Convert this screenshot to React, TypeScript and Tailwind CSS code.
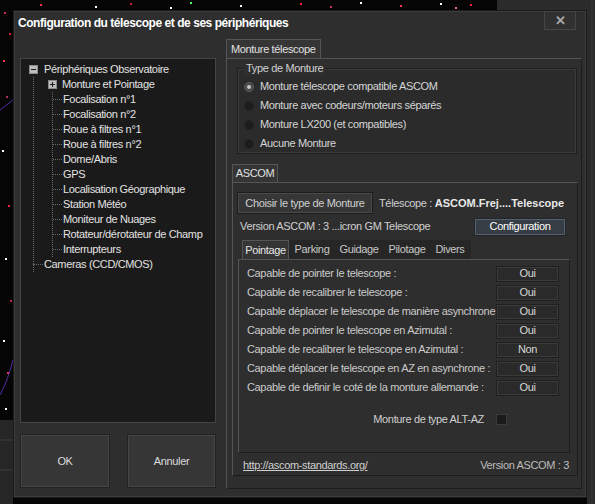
import React from 'react';

const font = { fontFamily: '"Liberation Sans", Arial, sans-serif' };

const treeChildren = [
  'Focalisation n°1',
  'Focalisation n°2',
  'Roue à filtres n°1',
  'Roue à filtres n°2',
  'Dome/Abris',
  'GPS',
  'Localisation Géographique',
  'Station Météo',
  'Moniteur de Nuages',
  'Rotateur/dérotateur de Champ',
  'Interrupteurs',
];

const capabilities: [string, string][] = [
  ['Capable de pointer le telescope :', 'Oui'],
  ['Capable de recalibrer le telescope :', 'Oui'],
  ['Capable déplacer le telescope de manière asynchrone :', 'Oui'],
  ['Capable de pointer le telescope en Azimutal :', 'Oui'],
  ['Capable de recalibrer le telescope en Azimutal :', 'Non'],
  ['Capable déplacer le telescope en AZ en asynchrone :', 'Oui'],
  ['Capable de definir le coté de la monture allemande :', 'Oui'],
];

const mountTypes = [
  'Monture télescope compatible ASCOM',
  'Monture avec codeurs/moteurs séparés',
  'Monture LX200 (et compatibles)',
  'Aucune Monture',
];

const Stars: React.FC = () => {
  const dots = [
    [4, 12, '#c0304a'], [9, 33, '#d02040'], [3, 60, '#ff3050'], [6, 96, '#b03060'],
    [2, 150, '#ffffff'], [8, 205, '#ff2040'], [5, 258, '#ffffff'], [10, 300, '#c02050'],
    [3, 340, '#ffffff'], [7, 372, '#e03050'], [5, 408, '#ffffff'], [40, 4, '#ff3050'],
    [95, 6, '#ffffff'], [130, 3, '#d02040'], [170, 7, '#ffffff'], [190, 2, '#40ff60'],
    [240, 5, '#ffffff'], [300, 3, '#ff2040'], [330, 6, '#c03070'], [360, 2, '#ffffff'],
    [400, 5, '#ff3050'], [440, 3, '#ffffff'], [455, 7, '#ff60a0'], [470, 4, '#ff2040'],
  ] as const;
  return (
    <svg className="absolute inset-0" width="595" height="504">
      <rect x="0" y="0" width="595" height="504" fill="#050505" />
      <rect x="497" y="0" width="98" height="10" fill="#2b2b2b" />
      <rect x="587" y="0" width="8" height="504" fill="#2b2b2b" />
      <line x1="592" y1="0" x2="592" y2="504" stroke="#3a3a3a" />
      <rect x="0" y="420" width="13" height="84" fill="#262626" />
      <line x1="0" y1="440" x2="13" y2="440" stroke="#3c3c3c" />
      <line x1="0" y1="470" x2="13" y2="470" stroke="#3c3c3c" />
      <path d="M0 110 L13 100 M0 395 Q8 380 13 360" stroke="#5030a0" strokeWidth="1" fill="none" />
      {dots.map(([x, y, c], i) => (
        <rect key={i} x={x} y={y} width="2" height="2" fill={c} />
      ))}
    </svg>
  );
};

const TreeBox: React.FC<{ plus?: boolean }> = ({ plus }) => (
  <span className="w-[9px] h-[9px] bg-[#bdbdbd] border border-[#8a8a8a] flex items-center justify-center relative">
    <span className="absolute w-[5px] h-px bg-[#1a1a1a]" />
    {plus && <span className="absolute h-[5px] w-px bg-[#1a1a1a]" />}
  </span>
);

const Tree: React.FC = () => (
  <div className="h-[365px] bg-[#1a1a1a] border border-[#444] pt-[3px] text-[11px] text-[#e2e2e2] leading-[15px]">
    <div className="flex items-center h-[15px] pl-[8px]">
      <TreeBox />
      <span className="ml-[6px]">Périphériques Observatoire</span>
    </div>
    <div className="ml-[12px] border-l border-dotted border-[#6a6a6a]">
      <div className="flex items-center h-[15px] pl-[14px]">
        <TreeBox plus />
        <span className="ml-[5px]">Monture et Pointage</span>
      </div>
      <div className="ml-[18px] border-l border-dotted border-[#6a6a6a] h-[165px]">
        {treeChildren.map((t) => (
          <div key={t} className="flex items-center h-[15px]">
            <span className="w-[9px] border-t border-dotted border-[#6a6a6a]" />
            <span className="ml-[1px]">{t}</span>
          </div>
        ))}
      </div>
      <div className="flex items-center h-[15px] -ml-px">
        <span className="w-[10px] border-t border-dotted border-[#6a6a6a]" />
        <span className="ml-[1px]">Cameras (CCD/CMOS)</span>
      </div>
    </div>
  </div>
);

export default function App() {
  return (
    <div className="relative w-[595px] h-[504px] overflow-hidden tracking-[-0.35px]" style={font}>
      <Stars />
      <div className="relative ml-[13px] mt-[10px] w-[574px] h-[488px] bg-[#2e2e2e] border border-[#1a1a1a] shadow-[inset_0_0_0_1px_#3c3c3c] flex flex-col">
        <div className="h-[28px] flex items-start justify-between">
          <span className="ml-[4px] mt-[3px] text-[12px] font-bold text-white tracking-[-0.45px]">
            Configuration du télescope et de ses périphériques
          </span>
          <div className="mr-[10px] w-[32px] h-[19px] bg-[#303030] border border-[#454545] flex items-center justify-center text-[#a8a8a8] text-[13px] font-bold">
            ✕
          </div>
        </div>
        <div className="flex flex-1">
          <div className="ml-[6px] w-[196px] pt-[19px] flex flex-col">
            <Tree />
            <div className="mt-[11px] flex justify-between">
              <div className="w-[90px] h-[54px] bg-[#363636] border border-[#222] shadow-[inset_0_0_0_1px_#454545] flex items-center justify-center text-[11px] text-[#dcdcdc]">
                OK
              </div>
              <div className="w-[89px] h-[54px] bg-[#363636] border border-[#222] shadow-[inset_0_0_0_1px_#454545] flex items-center justify-center text-[11px] text-[#dcdcdc]">
                Annuler
              </div>
            </div>
          </div>
          <div className="ml-[10px] w-[356px] flex flex-col">
            <div className="flex">
              <div className="h-[19px] px-[4px] bg-[#353535] border border-b-0 border-[#555] text-[11px] text-[#e0e0e0] flex items-center">
                Monture télescope
              </div>
            </div>
            <div className="h-[431px] border border-[#555] border-b-[#1c1c1c] border-r-[#1c1c1c] bg-[#2e2e2e] pl-[10px] pr-[4px] pt-[9px]">
              <div className="relative h-[86px] border border-[#1f1f1f] shadow-[inset_0_0_0_1px_#3a3a3a] bg-[#2b2b2b]">
                <span className="absolute left-[6px] -top-[7px] bg-[#2e2e2e] px-[2px] text-[11px] leading-[13px] text-[#d0d0d0]">
                  Type de Monture
                </span>
                <div className="pt-[8px] pl-[6px] flex flex-col">
                  {mountTypes.map((m, i) => (
                    <div key={m} className="h-[19px] flex items-center">
                      {i === 0 ? (
                        <span className="w-[10px] h-[10px] rounded-full bg-[#4a4a4a] border border-[#5c5c5c] flex items-center justify-center">
                          <span className="w-[4px] h-[4px] rounded-full bg-[#c8c8c8]" />
                        </span>
                      ) : (
                        <span className="w-[10px] h-[10px] rounded-full bg-[#1c1c1c] border border-[#242424]" />
                      )}
                      <span className="ml-[6px] text-[11px] text-[#d6d6d6]">{m}</span>
                    </div>
                  ))}
                </div>
              </div>
              <div className="mt-[10px] -ml-[5px] flex">
                <div className="h-[18px] w-[46px] bg-[#353535] border border-b-0 border-[#555] text-[11px] text-[#e0e0e0] flex items-center justify-center">
                  ASCOM
                </div>
              </div>
              <div className="-ml-[5px] h-[294px] w-[346px] border border-[#555] border-b-[#1c1c1c] border-r-[#1c1c1c] pl-[4px] pr-[6px] pt-[9px]">
                <div className="flex items-center">
                  <div className="w-[136px] h-[22px] bg-[#363636] border border-[#1c1c1c] shadow-[inset_0_0_0_1px_#4a4a4a] flex items-center justify-center text-[11px] text-[#d0d0d0]">
                    Choisir le type de Monture
                  </div>
                  <span className="ml-[6px] text-[11px] text-[#cfcfcf] whitespace-nowrap">
                    Télescope : <span className="font-bold text-[#e8e8e8] tracking-[0px]">ASCOM.Frej....Telescope</span>
                  </span>
                </div>
                <div className="flex items-center justify-between h-[21px] mt-[2px]">
                  <span className="ml-[3px] text-[11px] text-[#d0d0d0]">Version ASCOM : 3 ...icron GM Telescope</span>
                  <div className="mr-[5px] w-[92px] h-[18px] bg-[#363d44] border border-[#20252a] shadow-[inset_0_0_0_1px_#56606a] flex items-center justify-center text-[11px] text-white">
                    Configuration
                  </div>
                </div>
                <div className="ml-[5px] mt-[3px] flex h-[19px] w-[229px] bg-[#262626] text-[11px] text-[#c8c8c8]">
                  <div className="w-[47px] bg-[#353535] border border-b-0 border-[#555] flex items-center justify-center text-[#e6e6e6]">
                    Pointage
                  </div>
                  <div className="w-[46px] flex items-center justify-center">Parking</div>
                  <div className="w-[48px] flex items-center justify-center">Guidage</div>
                  <div className="w-[48px] flex items-center justify-center">Pilotage</div>
                  <div className="w-[38px] flex items-center justify-center">Divers</div>
                </div>
                <div className="ml-[1px] h-[194px] w-[332px] border border-[#555] border-b-[#1c1c1c] border-r-[#1c1c1c] bg-[#2e2e2e] pt-[4px] pl-[8px]">
                  {capabilities.map(([label, v]) => (
                    <div key={label} className="h-[19px] flex items-center">
                      <span className="w-[249px] text-[11px] text-[#cacaca] whitespace-nowrap">{label}</span>
                      <span className="w-[63px] h-[16px] bg-[#2a2a2a] border border-[#202020] shadow-[inset_0_0_0_1px_#3a3a3a] flex items-center justify-center text-[11px] text-[#d8d8d8]">
                        {v}
                      </span>
                    </div>
                  ))}
                  <div className="mt-[14px] flex items-center justify-end pr-[62px]">
                    <span className="text-[11px] text-[#cfcfcf]">Monture de type ALT-AZ</span>
                    <span className="ml-[12px] w-[11px] h-[11px] bg-[#1a1a1a] border border-[#3a3a3a]" />
                  </div>
                </div>
                <div className="mt-[4px] flex justify-between items-center">
                  <span className="ml-[6px] text-[11px] text-[#cfcfcf] underline">http://ascom-standards.org/</span>
                  <span className="mr-[2px] text-[11px] text-[#bdbdbd]">Version ASCOM : 3</span>
                </div>
              </div>
            </div>
          </div>
        </div>
      </div>
    </div>
  );
}
